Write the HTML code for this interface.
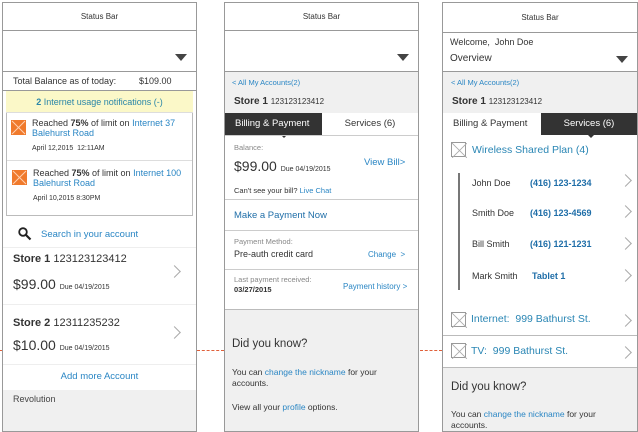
<!DOCTYPE html>
<html><head><style>
*{margin:0;padding:0;box-sizing:border-box}
body{width:638px;height:430px;background:#fff;font-family:"Liberation Sans",Arial,sans-serif;position:relative;overflow:hidden;color:#333}
.a{position:absolute}
.p{position:absolute;top:2px;height:430px;border:1px solid #999;background:#fff;overflow:hidden}
.sb{position:absolute;left:0;right:0;top:0;height:28px;border-bottom:1px solid #999;font-size:8px;text-align:center;line-height:28px;color:#333}
.dd{position:absolute;left:0;right:0;top:28px;height:41px;border-bottom:1px solid #999}
.tri{position:absolute;right:9px;top:23px;width:0;height:0;border-left:6px solid transparent;border-right:6px solid transparent;border-top:7px solid #444}
.blue{color:#2a86c4}
.db{color:#1f6ea8;font-weight:bold}
.chev{position:absolute;width:9px;height:9px;border-right:1px solid #aaa;border-top:1px solid #aaa;transform:rotate(45deg)}
.hl{position:absolute;left:0;right:0;height:1px;background:#ddd}
.xbox{position:absolute;width:15px;height:15px;border:1px solid #999}
.xbox svg{position:absolute;left:0;top:0}
.dash{position:absolute;top:350px;height:0;border-top:1.5px dashed #e0603a}
</style></head><body>
<div class="dash" style="left:0;width:3px"></div>
<div class="dash" style="left:197px;width:27px"></div>
<div class="dash" style="left:420px;width:22px"></div>

<!-- Panel 1 -->
<div class="p" style="left:2px;width:195px">
 <div class="sb">Status Bar</div>
 <div class="dd"><div class="tri"></div></div>
 <div class="a" style="left:0;right:0;top:69px;height:19px;border-bottom:1px solid #999;font-size:9px;line-height:18px"><span class="a" style="left:10px">Total Balance as of today:</span><span class="a" style="left:136px">$109.00</span></div>
 <div class="a" style="left:3px;right:3px;top:88px;height:125px;border:1px solid #bbb;border-top:none"></div>
 <div class="a" style="left:3px;right:3px;top:88px;height:22px;background:#fbf8c8;border-bottom:1px solid #ddd;font-size:9px;text-align:center;line-height:22px;color:#2a86a8"><b>2</b> Internet usage notifications (-)</div>
 <div class="a" style="left:8px;top:117px;width:15px;height:15px;background:#f07a2c"><svg width="15" height="15"><path d="M1 1L14 14M14 1L1 14" stroke="#ffd0b0" stroke-width="1"/></svg></div>
 <div class="a" style="left:29px;top:115px;width:162px;font-size:9px;line-height:10px">Reached <b>75%</b> of limit on <span class="blue">Internet 37 Balehurst Road</span></div>
 <div class="a" style="left:29px;top:142px;font-size:7px">April 12,2015&nbsp; 12:11AM</div>
 <div class="a" style="left:4px;right:4px;top:157px;height:1px;background:#ddd"></div>
 <div class="a" style="left:9px;top:167px;width:15px;height:15px;background:#f07a2c"><svg width="15" height="15"><path d="M1 1L14 14M14 1L1 14" stroke="#ffd0b0" stroke-width="1"/></svg></div>
 <div class="a" style="left:30px;top:165px;width:162px;font-size:9px;line-height:10px">Reached <b>75%</b> of limit on <span class="blue">Internet 100 Balehurst Road</span></div>
 <div class="a" style="left:30px;top:192px;font-size:7px">April 10,2015 8:30PM</div>
 <svg class="a" style="left:15px;top:224px" width="14" height="14"><circle cx="5" cy="5" r="3.8" stroke="#222" stroke-width="1.8" fill="none"/><path d="M8 8L12.5 12.5" stroke="#222" stroke-width="2.2"/></svg>
 <div class="a blue" style="left:38px;top:226px;font-size:9.5px">Search in your account</div>
 <div class="hl" style="top:244px;background:#eee"></div>
 <div class="a" style="left:10px;top:250px;font-size:11px"><b>Store 1</b> 123123123412</div>
 <div class="a" style="left:10px;top:273px;font-size:14px">$99.00 <span style="font-size:7px">Due 04/19/2015</span></div>
 <div class="chev" style="left:167px;top:264px"></div>
 <div class="hl" style="top:301px;background:#eee"></div>
 <div class="a" style="left:10px;top:314px;font-size:11px"><b>Store 2</b> 12311235232</div>
 <div class="a" style="left:10px;top:334px;font-size:14px">$10.00 <span style="font-size:7px">Due 04/19/2015</span></div>
 <div class="chev" style="left:167px;top:325px"></div>
 <div class="hl" style="top:361px;background:#eee"></div>
 <div class="a blue" style="left:0;right:0;top:368px;text-align:center;font-size:9.5px">Add more Account</div>
 <div class="a" style="left:0;right:0;top:387px;height:50px;background:#f0f0f0"></div>
 <div class="a" style="left:10px;top:391px;font-size:9px;color:#444">Revolution</div>
</div>

<!-- Panel 2 -->
<div class="p" style="left:224px;width:195px">
 <div class="sb">Status Bar</div>
 <div class="dd"><div class="tri"></div></div>
 <div class="a" style="left:0;right:0;top:69px;height:41px;background:#f0f0f0"></div>
 <div class="a blue" style="left:7px;top:75px;font-size:7.5px">&lt; All My Accounts(2)</div>
 <div class="a" style="left:9px;top:93px;font-size:10px"><b>Store 1</b> <span style="font-size:8px">123123123412</span></div>
 <div class="a" style="left:0;width:97px;top:110px;height:22px;background:#333;color:#fff;font-size:9.5px;line-height:22px;padding-left:10px">Billing &amp; Payment</div>
 <div class="a" style="left:55px;top:131px;width:0;height:0;border-left:4px solid transparent;border-right:4px solid transparent;border-top:4px solid #333"></div>
 <div class="a" style="left:97px;right:0;top:110px;height:22px;font-size:9.5px;line-height:22px;text-align:center">Services (6)</div>
 <div class="hl" style="top:132px;background:#ccc"></div>
 <div class="a" style="left:9px;top:140px;font-size:7.5px;color:#888">Balance:</div>
 <div class="a" style="left:9px;top:155px;font-size:14px">$99.00 <span style="font-size:7px">Due 04/19/2015</span></div>
 <div class="a blue" style="left:139px;top:154px;font-size:9.5px">View Bill&gt;</div>
 <div class="a" style="left:9px;top:183px;font-size:7.5px">Can't see your bill? <span class="blue">Live Chat</span></div>
 <div class="hl" style="top:196px;background:#ccc"></div>
 <div class="a blue" style="left:9px;top:207px;font-size:9.5px;color:#1f6ea8">Make a Payment Now</div>
 <div class="hl" style="top:227px;background:#ccc"></div>
 <div class="a" style="left:9px;top:234px;font-size:7.5px;color:#888">Payment Method:</div>
 <div class="a" style="left:9px;top:246px;font-size:9px">Pre-auth credit card</div>
 <div class="a blue" style="left:143px;top:247px;font-size:8px">Change&nbsp; &gt;</div>
 <div class="hl" style="top:266px;background:#ccc"></div>
 <div class="a" style="left:9px;top:272px;font-size:7.5px;color:#888">Last payment received:</div>
 <div class="a" style="left:9px;top:282px;font-size:7.5px;font-weight:bold">03/27/2015</div>
 <div class="a blue" style="left:118px;top:279px;font-size:8px">Payment history &gt;</div>
 <div class="a" style="left:0;right:0;top:306px;height:130px;background:#f0f0f0;border-top:1px solid #bbb"></div>
 <div class="a" style="left:7px;top:335px;font-size:11.5px">Did you know?</div>
 <div class="a" style="left:7px;top:364px;width:180px;font-size:8.5px;line-height:11px">You can <span class="blue">change the nickname</span> for your accounts.</div>
 <div class="a" style="left:7px;top:399px;font-size:8.5px">View all your <span class="blue">profile</span> options.</div>
</div>

<!-- Panel 3 -->
<div class="p" style="left:442px;width:196px">
 <div class="sb" style="height:30px;line-height:30px">Status Bar</div>
 <div class="a" style="left:0;right:0;top:30px;height:39px;border-bottom:1px solid #999"><div class="tri" style="top:23px"></div>
  <div class="a" style="left:7px;top:4px;font-size:9px">Welcome,&nbsp; John Doe</div>
  <div class="a" style="left:7px;top:20px;font-size:10px">Overview</div></div>
 <div class="a" style="left:0;right:0;top:69px;height:41px;background:#f0f0f0"></div>
 <div class="a blue" style="left:8px;top:75px;font-size:7.5px">&lt; All My Accounts(2)</div>
 <div class="a" style="left:9px;top:93px;font-size:10px"><b>Store 1</b> <span style="font-size:8px">123123123412</span></div>
 <div class="a" style="left:0;width:98px;top:110px;height:22px;font-size:9.5px;line-height:22px;padding-left:10px">Billing &amp; Payment</div>
 <div class="a" style="left:98px;right:0;top:110px;height:22px;background:#333;color:#fff;font-size:9.5px;line-height:22px;text-align:center">Services (6)</div>
 <div class="a" style="left:144px;top:131px;width:0;height:0;border-left:4px solid transparent;border-right:4px solid transparent;border-top:4px solid #333"></div>
 <div class="xbox" style="left:8px;top:139px"><svg width="15" height="15"><path d="M0 0L15 15M15 0L0 15" stroke="#aaa" stroke-width="0.8"/></svg></div>
 <div class="a blue" style="left:29px;top:141px;font-size:10.5px;color:#2a86b4">Wireless Shared Plan (4)</div>
 <div class="a" style="left:15px;top:170px;width:2px;height:117px;background:#777"></div>
 <div class="a" style="left:29px;top:175px;font-size:9px">John Doe</div><div class="a db" style="left:87px;top:175px;font-size:9px">(416) 123-1234</div><div class="chev" style="left:178px;top:173px"></div>
 <div class="a" style="left:29px;top:205px;font-size:9px">Smith Doe</div><div class="a db" style="left:87px;top:205px;font-size:9px">(416) 123-4569</div><div class="chev" style="left:178px;top:204px"></div>
 <div class="a" style="left:29px;top:236px;font-size:9px">Bill Smith</div><div class="a db" style="left:87px;top:236px;font-size:9px">(416) 121-1231</div><div class="chev" style="left:178px;top:236px"></div>
 <div class="a" style="left:29px;top:268px;font-size:9px">Mark Smith</div><div class="a db" style="left:89px;top:268px;font-size:9px">Tablet 1</div><div class="chev" style="left:178px;top:268px"></div>
 <div class="xbox" style="left:8px;top:309px"><svg width="15" height="15"><path d="M0 0L15 15M15 0L0 15" stroke="#aaa" stroke-width="0.8"/></svg></div>
 <div class="a" style="left:28px;top:310px;font-size:10.5px;color:#2a86b4">Internet:&nbsp; 999 Bathurst St.</div><div class="chev" style="left:178px;top:313px"></div>
 <div class="hl" style="top:332px;background:#bbb"></div>
 <div class="xbox" style="left:8px;top:340px"><svg width="15" height="15"><path d="M0 0L15 15M15 0L0 15" stroke="#aaa" stroke-width="0.8"/></svg></div>
 <div class="a" style="left:28px;top:342px;font-size:10.5px;color:#2a86b4">TV:&nbsp; 999 Bathurst St.</div><div class="chev" style="left:178px;top:345px"></div>
 <div class="a" style="left:0;right:0;top:364px;height:80px;background:#f0f0f0;border-top:1px solid #bbb"></div>
 <div class="a" style="left:8px;top:378px;font-size:11.5px">Did you know?</div>
 <div class="a" style="left:8px;top:406px;width:172px;font-size:8.5px;line-height:11px">You can <span class="blue">change the nickname</span> for your accounts.</div>
</div>
</body></html>
